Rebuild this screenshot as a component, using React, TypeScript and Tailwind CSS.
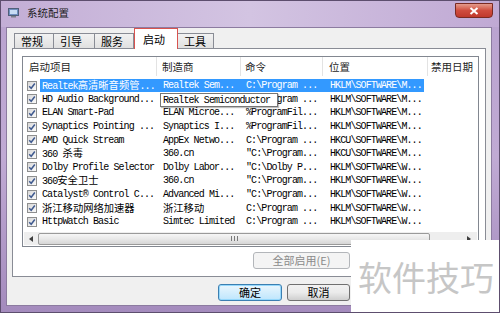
import React from "react"

type Row = { name: string; maker: string; cmd: string; loc: string; selected?: boolean }

const rows: Row[] = [
    { name: "Realtek高清晰音频管...", maker: "Realtek Sem...", cmd: "C:\\Program ...", loc: "HKLM\\SOFTWARE\\M...", selected: true },
    { name: "HD Audio Background...", maker: "", cmd: "C:\\Program ...", loc: "HKLM\\SOFTWARE\\M..." },
    { name: "ELAN Smart-Pad", maker: "ELAN Microe...", cmd: "%ProgramFil...", loc: "HKLM\\SOFTWARE\\M..." },
    { name: "Synaptics Pointing ...", maker: "Synaptics I...", cmd: "%ProgramFil...", loc: "HKLM\\SOFTWARE\\M..." },
    { name: "AMD Quick Stream", maker: "AppEx Netwo...", cmd: "C:\\Program ...", loc: "HKCU\\SOFTWARE\\M..." },
    { name: "360 杀毒", maker: "360.cn", cmd: "\"C:\\Program...", loc: "HKCU\\SOFTWARE\\M..." },
    { name: "Dolby Profile Selector", maker: "Dolby Labor...", cmd: "\"C:\\Dolby P...", loc: "HKLM\\SOFTWARE\\W..." },
    { name: "360安全卫士", maker: "360.cn", cmd: "\"C:\\Program...", loc: "HKLM\\SOFTWARE\\W..." },
    { name: "Catalyst® Control C...", maker: "Advanced Mi...", cmd: "\"C:\\Program...", loc: "HKLM\\SOFTWARE\\W..." },
    { name: "浙江移动网络加速器", maker: "浙江移动", cmd: "C:\\Program ...", loc: "HKLM\\SOFTWARE\\W..." },
    { name: "HttpWatch Basic", maker: "Simtec Limited", cmd: "C:\\Program ...", loc: "HKLM\\SOFTWARE\\W..." },
]

const tabs = ["常规", "引导", "服务", "启动", "工具"]
const tabWidths = ["w-[40px]", "w-[42px]", "w-[40px]", "w-[44px]", "w-[37px]"]

const cjk = "font-['Noto_Sans_CJK_SC',sans-serif]"
const mono = "font-['Liberation_Mono','Noto_Sans_CJK_SC',monospace]"

// CJK runs get their own size so they keep their full width next to the squeezed latin text
function MixedText({ text }: { text: string }) {
    const parts = text.split(/([\u4e00-\u9fff]+)/).filter(Boolean)
    return (
        <>
            {parts.map((p, i) =>
                /[\u4e00-\u9fff]/.test(p) ?
                    <span key={i} className={`text-[10.3px] tracking-normal ${cjk}`}>{p}</span>
                    :
                    <span key={i}>{p}</span>
            )}
        </>
    )
}

function CheckBox() {
    return (
        <span className="w-[10px] h-[10px] border border-[#8e8f8f] bg-gradient-to-br from-[#d8d8d8] to-[#fbfbfb] flex items-center justify-center">
            <svg width="8" height="8" viewBox="0 0 8 8">
                <path d="M1.2 4.2 L3.2 6.3 L6.8 1.5" fill="none" stroke="#3f5a8f" strokeWidth="1.5" />
            </svg>
        </span>
    )
}

function WinButton({ label, disabled, focused, width }: { label: string; disabled?: boolean; focused?: boolean; width: string }) {
    return (
        <div className={`${width} h-[17px] rounded-[3px] border flex items-center justify-center text-[11px] ${cjk}
            ${disabled ? 'border-[#b3b6ba] bg-[#f4f4f4] text-[#8a8a8a]' :
                focused ? 'border-[#3c7fb1] bg-gradient-to-b from-[#eaf6fd] to-[#bee6fd] text-black shadow-[inset_0_0_0_1px_#95d8fc]' :
                    'border-[#707070] bg-gradient-to-b from-[#f2f2f2] via-[#ebebeb] to-[#cfcfcf] text-black'}`}>
            {label}
        </div>
    )
}

export default function App() {
    return (
        <div className="relative w-[500px] h-[313px] overflow-hidden flex flex-col bg-gradient-to-b from-[#b9a2cf] via-[#c0aad4] to-[#a48bbd] border border-[#5d4e6e]">
            {/* title bar */}
            <div className="h-[26px] flex items-start justify-between bg-gradient-to-r from-[#c3aed6] via-[#d3c4e2] to-[#c0a9d4]">
                <div className="flex items-center gap-[8px] pl-[7px] pt-[7px]">
                    <svg width="11" height="10" viewBox="0 0 11 10">
                        <rect x="0.5" y="0.5" width="10" height="7" fill="#6f8fc0" stroke="#50607a" />
                        <rect x="2" y="2" width="7" height="4" fill="#c7dcf4" />
                        <rect x="3" y="8" width="5" height="1.5" fill="#7a7f88" />
                    </svg>
                    <span className={`text-[10.5px] leading-none text-[#1b1b1b] ${cjk}`}>系统配置</span>
                </div>
                <div className="mt-[2px] mr-[6px] w-[38px] h-[15px] rounded-b-[4px] border border-[#7a2a22] bg-gradient-to-b from-[#e49a8c] via-[#cf4c3e] to-[#c0392c] flex items-center justify-center">
                    <svg width="10" height="8" viewBox="0 0 10 8">
                        <path d="M1.5 1 L8.5 7 M8.5 1 L1.5 7" stroke="#ffffff" strokeWidth="2" />
                    </svg>
                </div>
            </div>

            {/* client area */}
            <div className="flex-1 ml-[5px] mr-[7px] mb-[6px] bg-[#f0f0f0] border border-[#8c7ba0] flex flex-col">
                {/* tabs */}
                <div className="h-[20px] flex items-end pl-[7px]">
                    {tabs.map((t, i) => (
                        i === 3 ?
                            <div key={t} className={`${tabWidths[i]} h-[21px] -mb-px z-10 relative bg-white border border-[#d9534f] border-b-0 flex items-center pl-[8px] text-[11px] ${cjk}`}>{t}</div>
                            :
                            <div key={t} className={`${tabWidths[i]} h-[15px] border border-[#898c95] border-b-0 -ml-px first:ml-0 bg-gradient-to-b from-[#f2f2f2] to-[#e0e0e0] flex items-center pl-[6px] text-[11px] ${cjk}`}>{t}</div>
                    ))}
                </div>

                {/* tab panel */}
                <div className="mx-[5px] h-[229px] border border-[#898c95] bg-white flex flex-col">
                    <div className="relative ml-[9px] mt-[7px] w-[457px] h-[191px] border border-[#828790] flex flex-col">
                        <div className={`h-[19px] flex text-[10.5px] text-[#1e1e1e] ${cjk}`}>
                            <div className="w-[134px] pl-[6px] flex items-center border-r border-[#e3e3e3]">启动项目</div>
                            <div className="w-[84px] pl-[5px] flex items-center border-r border-[#e3e3e3]">制造商</div>
                            <div className="w-[82px] pl-[4px] flex items-center border-r border-[#e3e3e3]">命令</div>
                            <div className="w-[105px] pl-[6px] flex items-center border-r border-[#e3e3e3]">位置</div>
                            <div className="flex-1 pl-[3px] flex items-center">禁用日期</div>
                        </div>
                        <div className={`pt-[3px] text-[10px] tracking-[-0.9px] text-black ${mono}`}>
                            {rows.map((r, i) => (
                                <div key={i} className="h-[13.6px] flex items-center">
                                    <div className="w-[17px] pl-[4px] flex items-center"><CheckBox /></div>
                                    <div className={`w-[384px] h-[13px] flex items-center whitespace-nowrap ${r.selected ? 'bg-[#3399ff] text-white' : ''}`}>
                                        <div className="w-[117px] pl-[2px] overflow-hidden"><MixedText text={r.name} /></div>
                                        <div className="w-[84px] pl-[6px] overflow-hidden"><MixedText text={r.maker} /></div>
                                        <div className="w-[82px] pl-[5px] overflow-hidden">{r.cmd}</div>
                                        <div className="flex-1 pl-[7px] overflow-hidden">{r.loc}</div>
                                    </div>
                                </div>
                            ))}
                        </div>

                        {/* tooltip */}
                        <div className={`absolute left-[137px] top-[36px] w-[118px] h-[14px] border border-[#767676] bg-white flex items-center pl-[2px] text-[10px] tracking-[-0.9px] whitespace-nowrap overflow-hidden shadow-[1px_1px_1px_rgba(0,0,0,0.25)] ${mono}`}>
                            Realtek Semiconductor
                        </div>

                        {/* horizontal scrollbar */}
                        <div className="mt-auto mb-[1px] mx-[1px] h-[13px] flex items-center bg-[#eeeeee]">
                            <div className="w-[14px] h-full flex items-center justify-center">
                                <svg width="4" height="6" viewBox="0 0 4 6"><path d="M4 0 L0 3 L4 6 Z" fill="#3d3d3d" /></svg>
                            </div>
                            <div className="w-[392px] h-[12px] rounded-[2px] border border-[#9a9a9a] bg-gradient-to-b from-[#f6f6f6] via-[#e8e8e8] to-[#d6d6d6] flex items-center justify-center">
                                <svg width="7" height="5" viewBox="0 0 7 5">
                                    <path d="M0.5 0 V5 M3.5 0 V5 M6.5 0 V5" stroke="#7a7a7a" strokeWidth="1" />
                                </svg>
                            </div>
                            <div className="flex-1" />
                            <div className="w-[16px] h-full flex items-center justify-center">
                                <svg width="4" height="6" viewBox="0 0 4 6"><path d="M0 0 L4 3 L0 6 Z" fill="#3d3d3d" /></svg>
                            </div>
                        </div>
                    </div>

                    <div className="ml-[240px] mt-[5px] flex">
                        <WinButton label="全部启用(E)" disabled width="w-[97px]" />
                    </div>
                </div>

                {/* dialog buttons */}
                <div className="mt-[7px] ml-[211px] flex gap-[5px]">
                    <WinButton label="确定" focused width="w-[64px]" />
                    <WinButton label="取消" width="w-[63px]" />
                </div>
            </div>

            {/* watermark */}
            <div className="absolute left-[350px] top-[239px] w-[150px] h-[74px] bg-white flex items-center pl-[7px]">
                <span className={`text-[34px] leading-none text-[#c6c6c6] ${cjk}`}>软件技巧</span>
            </div>
        </div>
    )
}
